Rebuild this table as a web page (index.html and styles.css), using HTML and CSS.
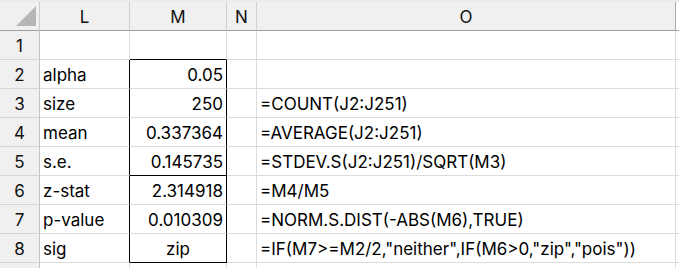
FILE: index.html
```html
<!DOCTYPE html>
<html>
<head>
<meta charset="utf-8">
<link rel="stylesheet" href="styles.css">
</head>
<body>
<div class="sheet">
  <div class="band"></div>

  <div class="cell corner"><svg class="tri" width="40" height="29" viewBox="0 0 40 29"><polygon points="36,4 36,24 16,24" fill="#b6b6b6"/></svg></div>
  <div class="cell colhead">L</div>
  <div class="cell colhead">M</div>
  <div class="cell colhead">N</div>
  <div class="cell colhead last">O</div>
  <div class="cell colhead tail"></div>

  <div class="cell rowhead">1</div>
  <div class="cell"></div>
  <div class="cell boxtop"></div>
  <div class="cell"></div>
  <div class="cell"></div>
  <div class="cell tail"></div>

  <div class="cell rowhead">2</div>
  <div class="cell boxl">alpha</div>
  <div class="cell box num">0.05</div>
  <div class="cell"></div>
  <div class="cell"></div>
  <div class="cell tail"></div>

  <div class="cell rowhead">3</div>
  <div class="cell boxl">size</div>
  <div class="cell box num">250</div>
  <div class="cell"></div>
  <div class="cell">=COUNT(J2:J251)</div>
  <div class="cell tail"></div>

  <div class="cell rowhead">4</div>
  <div class="cell boxl">mean</div>
  <div class="cell box num">0.337364</div>
  <div class="cell"></div>
  <div class="cell">=AVERAGE(J2:J251)</div>
  <div class="cell tail"></div>

  <div class="cell rowhead">5</div>
  <div class="cell boxl">s.e.</div>
  <div class="cell box num boxbot">0.145735</div>
  <div class="cell"></div>
  <div class="cell">=STDEV.S(J2:J251)/SQRT(M3)</div>
  <div class="cell tail"></div>

  <div class="cell rowhead">6</div>
  <div class="cell boxl">z-stat</div>
  <div class="cell box num">2.314918</div>
  <div class="cell"></div>
  <div class="cell">=M4/M5</div>
  <div class="cell tail"></div>

  <div class="cell rowhead">7</div>
  <div class="cell boxl">p-value</div>
  <div class="cell box num">0.010309</div>
  <div class="cell"></div>
  <div class="cell">=NORM.S.DIST(-ABS(M6),TRUE)</div>
  <div class="cell tail"></div>

  <div class="cell rowhead">8</div>
  <div class="cell boxl">sig</div>
  <div class="cell box mid boxbot">zip</div>
  <div class="cell"></div>
  <div class="cell">=IF(M7&gt;=M2/2,"neither",IF(M6&gt;0,"zip","pois"))</div>
  <div class="cell tail"></div>

  <div class="cell rowhead"></div>
  <div class="cell"></div>
  <div class="cell"></div>
  <div class="cell"></div>
  <div class="cell"></div>
  <div class="cell tail"></div>
</div>
</body>
</html>
```

FILE: styles.css
```css
html, body {
  margin: 0;
  padding: 0;
  background: #ffffff;
}

.sheet {
  display: grid;
  grid-template-columns: 40px 90px 97px 30px 419px 3px;
  grid-template-rows: 2px repeat(9, 29px) 29px;
  width: 679px;
  height: 268px;
  overflow: hidden;
  font-family: Inter, "Liberation Sans", sans-serif;
  font-size: 17px;
  color: #000;
}

.band {
  grid-column: 1 / -1;
  background: #e7eaee;
}

.cell {
  box-sizing: border-box;
  border-right: 1px solid #dadada;
  border-bottom: 1px solid #dadada;
  padding: 2px 3px 0 3px;
  line-height: 26px;
  white-space: nowrap;
  overflow: visible;
}

.tail {
  border-right: none;
}

.corner {
  background: #f0f0f0;
  border-right: 1px solid #cfcfcf;
  border-bottom: 1px solid #9f9f9f;
  padding: 0;
  line-height: 0;
}

.tri {
  display: block;
}

.colhead {
  background: #f0f0f0;
  border-right: 1px solid #cfcfcf;
  border-bottom: 1px solid #9f9f9f;
  text-align: center;
  color: #111;
}

.colhead.last {
  border-right: 1px solid #a8a8a8;
}

.colhead.tail {
  background: #ffffff;
  border-right: none;
}

.rowhead {
  background: #f0f0f0;
  border-right: 1px solid #c4c4c4;
  border-bottom: 1px solid #d4d4d4;
  text-align: center;
  color: #111;
}

.boxtop {
  border-bottom: 1px solid #000;
}

.boxl {
  border-right: 1px solid #000;
}

.box {
  border-right: 1px solid #000;
}

.boxbot {
  border-bottom: 1px solid #000;
}

.num {
  text-align: right;
}

.mid {
  text-align: center;
}
```
